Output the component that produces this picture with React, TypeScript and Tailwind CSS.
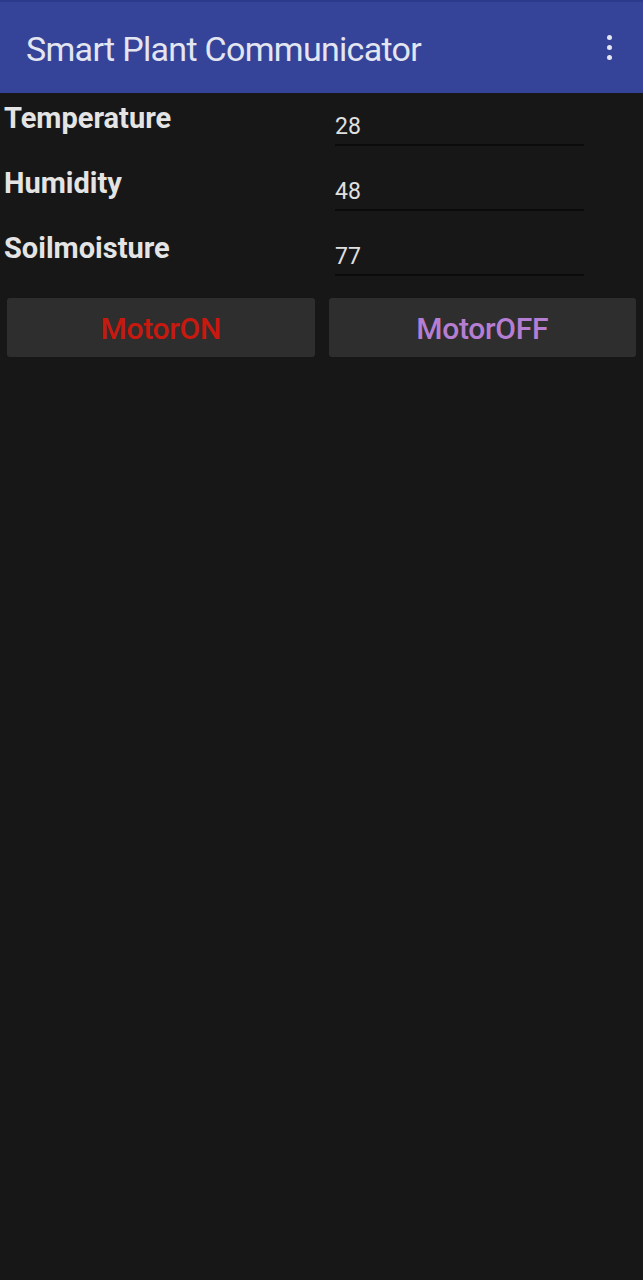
import React from 'react';

const readings = [
  { label: 'Temperature', value: '28' },
  { label: 'Humidity', value: '48' },
  { label: 'Soilmoisture', value: '77' },
];

export default function App() {
  return (
    <div className="min-h-[1280px] bg-[#171717] font-['Roboto',sans-serif]">
      {/* App bar */}
      <header className="h-[93px] bg-[#354399] border-t-2 border-[#2c3a8c] flex items-center justify-between pl-[26px] pr-[31px]">
        <h1 className="text-[34px] text-[#e3e6f1] tracking-[-0.7px] leading-[40px] pt-[3px]">Smart Plant Communicator</h1>
        <div className="flex flex-col gap-[5px] pb-[1px]">
          <span className="w-[5px] h-[5px] rounded-full bg-[#e3e6f1]" />
          <span className="w-[5px] h-[5px] rounded-full bg-[#e3e6f1]" />
          <span className="w-[5px] h-[5px] rounded-full bg-[#e3e6f1]" />
        </div>
      </header>

      {/* Readings */}
      <div className="pt-[6px]">
        {readings.map((r) => (
          <div key={r.label} className="flex h-[65px]">
            <div className="w-[335px] pl-[4px] text-[29px] font-bold text-[#e4e4e4] leading-[38px]">
              {r.label}
            </div>
            <div className="w-[249px] flex flex-col">
              <div className="h-[45px] pt-[14px] text-[23px] text-[#e0e0e0] leading-[28px]">{r.value}</div>
              <div className="h-[2px] bg-[#0b0b0b]" />
            </div>
          </div>
        ))}
      </div>

      {/* Motor buttons */}
      <div className="flex gap-[14px] px-[7px] pt-[4px]">
        <button className="flex-1 h-[59px] bg-[#2e2e2e] rounded-[3px] pt-[2px] text-[30px] font-medium tracking-[-0.3px] text-[#c8190f]">
          MotorON
        </button>
        <button className="flex-1 h-[59px] bg-[#2e2e2e] rounded-[3px] pt-[2px] text-[30px] font-medium tracking-[-0.3px] text-[#b67ed3]">
          MotorOFF
        </button>
      </div>
    </div>
  );
}
